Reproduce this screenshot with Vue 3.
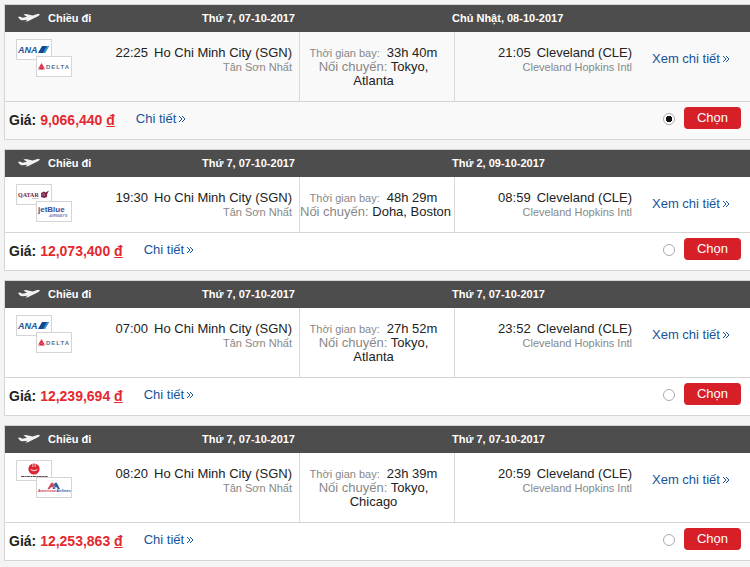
<script setup>
import { ref } from 'vue'

const selected = ref(0)

const flights = [
  { depart: 'Thứ 7, 07-10-2017', arrive: 'Chủ Nhật, 08-10-2017', from: '22:25', to: '21:05', duration: '33h 40m', stops: ['Tokyo,', 'Atlanta'], price: '9,066,440', logos: ['ana', 'delta'] },
  { depart: 'Thứ 7, 07-10-2017', arrive: 'Thứ 2, 09-10-2017', from: '19:30', to: '08:59', duration: '48h 29m', stops: ['Doha, Boston'], price: '12,073,400', logos: ['qatar', 'jetblue'] },
  { depart: 'Thứ 7, 07-10-2017', arrive: 'Thứ 7, 07-10-2017', from: '07:00', to: '23:52', duration: '27h 52m', stops: ['Tokyo,', 'Atlanta'], price: '12,239,694', logos: ['ana', 'delta'] },
  { depart: 'Thứ 7, 07-10-2017', arrive: 'Thứ 7, 07-10-2017', from: '08:20', to: '20:59', duration: '23h 39m', stops: ['Tokyo,', 'Chicago'], price: '12,253,863', logos: ['jal', 'american'] },
]
</script>

<template>
  <main class="results">
    <article v-for="(f, i) in flights" :key="i" class="card" :class="{ active: selected === i }">
      <header class="head">
        <div class="direction">
          <svg class="plane" viewBox="0 0 22 10" aria-hidden="true">
            <path d="M0 4 L1.6 3.6 L4.6 4.8 L9 3.8 L5.4 1.6 L8 1 L14.6 2.6 L18.6 1.2 Q21.2 0.4 21.8 1.3 Q21.8 2.5 19 3.8 L15.4 5.4 L10 8.2 L7.2 8.4 L9.6 6.7 L4.4 7.2 Q2.4 7.2 1.6 6 Z" />
          </svg>
          <span>Chiều đi</span>
        </div>
        <span class="depart">{{ f.depart }}</span>
        <span class="arrive">{{ f.arrive }}</span>
      </header>

      <div class="body">
        <section class="origin">
          <div class="logos">
            <span v-for="logo in f.logos" :key="logo" class="logo">
              <svg viewBox="0 0 34 19" aria-hidden="true">
                <g v-if="logo === 'ana'">
                  <text x="1" y="13" class="t-ana">ANA</text>
                  <path d="M25 6h7l-4 7h-7z" fill="#17478f" />
                  <path d="M30 6h2l-4 7h-2z" fill="#2f9fd0" />
                </g>
                <g v-else-if="logo === 'delta'">
                  <path d="M4.5 6L8 12 4.5 10.6 1 12z" fill="#e0344b" />
                  <path d="M4.5 10.4L8 12.6h-7z" fill="#b51f3a" />
                  <text x="9" y="12" class="t-delta">DELTA</text>
                </g>
                <g v-else-if="logo === 'qatar'">
                  <text x="1" y="12" class="t-qatar">QATAR</text>
                  <path d="M24 8l3-1.5 1.5 1L32 5.5l-1.8 3.4-.2 3.2-2.6.9-3.4-1z" fill="#7c2549" />
                  <path d="M24 10h4M26 8l2 2.5" stroke="#c9a3b4" stroke-width=".5" />
                  <path d="M15 13.5h7" stroke="#cfb3c0" stroke-width=".8" />
                </g>
                <g v-else-if="logo === 'jetblue'">
                  <text x="1" y="10" class="t-jet">jetBlue</text>
                  <text x="12" y="15" class="t-air">AIRWAYS</text>
                </g>
                <g v-else-if="logo === 'jal'">
                  <circle cx="17" cy="8" r="5.6" fill="#dc2433" />
                  <path d="M15.5 3v3M17 2.8v3.2M18.5 3v3" stroke="#fff" stroke-width=".5" />
                  <path d="M13.8 8.6q3.2 2.4 6.4 0" stroke="#fff" stroke-width=".9" fill="none" />
                  <path d="M4 15.5h27" stroke="#5b4b4e" stroke-width="1" stroke-dasharray="3 .5 2 .4" />
                </g>
                <g v-else>
                  <path d="M10.5 11L14.2 4.8h2l2.3 6.2h-2.2l-.6-1.8h-1.900l-1 1.8z" fill="#d74353" />
                  <path d="M15.5 11l2.3-6.2h2l3.2 6.2h-2.2l-.9-1.8h-1.700l-.5 1.8z" fill="#39589a" />
                  <path d="M15.2 6.5l1.8 1.8 1.8-1.8-1.8 4.6z" fill="#7c9cc7" />
                  <text x="1" y="14" class="t-aa"><tspan fill="#d5404f">American</tspan><tspan fill="#365899">Airlines</tspan></text>
                </g>
              </svg>
            </span>
          </div>
          <div class="place">
            <div><span class="time">{{ f.from }}</span>Ho Chi Minh City (SGN)</div>
            <div class="airport">Tân Sơn Nhất</div>
          </div>
        </section>

        <section class="journey">
          <div><small>Thời gian bay:</small>{{ f.duration }}</div>
          <div><span class="muted">Nối chuyến:</span> {{ f.stops[0] }}</div>
          <div v-for="stop in f.stops.slice(1)" :key="stop">{{ stop }}</div>
        </section>

        <section class="place">
          <div><span class="time">{{ f.to }}</span>Cleveland (CLE)</div>
          <div class="airport">Cleveland Hopkins Intl</div>
        </section>

        <div class="more">
          <a href="#">Xem chi tiết <svg class="chevrons" viewBox="0 0 8 8" aria-hidden="true"><path d="M1 1l3 3-3 3M4 1l3 3-3 3" /></svg></a>
        </div>
      </div>

      <footer class="foot">
        <strong class="price">Giá: <span class="amount">{{ f.price }} <u>đ</u></span></strong>
        <a href="#">Chi tiết <svg class="chevrons" viewBox="0 0 8 8" aria-hidden="true"><path d="M1 1l3 3-3 3M4 1l3 3-3 3" /></svg></a>
        <div class="choose">
          <input v-model="selected" type="radio" name="flight" :value="i" :aria-labelledby="`pick-${i}`" />
          <button :id="`pick-${i}`" type="button" @click="selected = i">Chọn</button>
        </div>
      </footer>
    </article>
  </main>
</template>

<style>
body {
  background: #f4f4f4;
}
</style>

<style scoped>
.results {
  display: flex;
  flex-direction: column;
  gap: 9px;
  padding: 4px 0 6px 4px;
  font-family: "Liberation Sans", Arial, sans-serif;
  font-size: 13px;
  line-height: 14px;
  color: #222;
}
.card {
  border: 1px solid #d5d5d5;
  border-right: 0;
  background: #fff;
}
.card.active {
  background: #f9f9f9;
}
.head,
.body {
  display: grid;
  grid-template-columns: minmax(0, 295fr) minmax(0, 155fr) minmax(0, 177fr) minmax(0, 118fr);
}
.head {
  align-items: center;
  height: 25px;
  padding-bottom: 2px;
  background: #4d4d4d;
  color: #fff;
  font-size: 11px;
  font-weight: bold;
}
.direction {
  grid-area: 1 / 1;
  display: flex;
  align-items: center;
  gap: 8px;
  padding-left: 13px;
}
.plane {
  width: 22px;
  height: 10px;
  fill: #f2f2f2;
}
.depart {
  grid-area: 1 / 1;
  justify-self: end;
  padding-right: 5px;
}
.arrive {
  grid-area: 1 / 3;
  margin-left: -3px;
}
.origin {
  display: flex;
  justify-content: space-between;
  padding: 0 7px 0 11px;
  border-right: 1px solid #d9d9d9;
}
.logos {
  display: flex;
  align-items: flex-start;
  padding-top: 7px;
}
.logo {
  width: 34px;
  height: 19px;
  border: 1px solid #d5d5d5;
  background: #fff;
}
.logo + .logo {
  margin: 17px 0 0 -16px;
}
.logo svg {
  display: block;
  width: 34px;
  height: 19px;
}
.logo text {
  font-family: "Liberation Sans", Arial, sans-serif;
}
.logo .t-ana {
  font-size: 9px;
  font-weight: bold;
  font-style: italic;
  fill: #24579b;
}
.logo .t-delta {
  font-size: 6px;
  font-weight: bold;
  letter-spacing: 1px;
  fill: #5b7394;
}
.logo .t-qatar {
  font-family: "Liberation Serif", serif;
  font-size: 6px;
  font-weight: bold;
  fill: #6e1c42;
}
.logo .t-jet {
  font-size: 8px;
  font-weight: bold;
  fill: #35509a;
}
.logo .t-air {
  font-size: 4px;
  font-weight: bold;
  font-style: italic;
  fill: #6f82bb;
}
.logo .t-aa {
  font-size: 4px;
  font-weight: bold;
}
.place {
  padding: 14px 0 13px;
  text-align: right;
}
.time {
  margin-right: 6px;
}
.airport {
  color: #888;
  font-size: 11px;
}
.journey {
  padding: 14px 7px 13px 0;
  border-right: 1px solid #d9d9d9;
  text-align: center;
  white-space: nowrap;
}
.journey small {
  margin-right: 7px;
  color: #888;
  font-size: 11px;
}
.muted {
  color: #888;
}
.more {
  padding: 20px 0 0 20px;
}
a {
  color: #15539b;
  text-decoration: none;
}
.chevrons {
  width: 8px;
  height: 8px;
  margin-left: -2px;
  fill: none;
  stroke: #15539b;
}
.foot {
  display: flex;
  align-items: center;
  height: 34px;
  padding: 0 9px 3px 4px;
  border-top: 1px solid #d5d5d5;
}
.price {
  margin-right: 21px;
  padding-top: 2px;
  font-size: 14px;
}
.amount {
  color: #e3292f;
}
.choose {
  display: flex;
  align-items: center;
  gap: 9px;
  margin-left: auto;
}
input {
  appearance: none;
  box-sizing: border-box;
  width: 12px;
  height: 12px;
  margin: 0;
  border: 1px solid #aaa;
  border-radius: 50%;
  background: #fff;
}
input:checked {
  background: radial-gradient(circle, #111 0 3px, #fff 3px);
}
button {
  width: 57px;
  height: 22px;
  margin-bottom: 2px;
  padding: 0;
  border: 0;
  border-radius: 4px;
  background: #d71f27;
  color: #fff;
  font: inherit;
}
</style>
